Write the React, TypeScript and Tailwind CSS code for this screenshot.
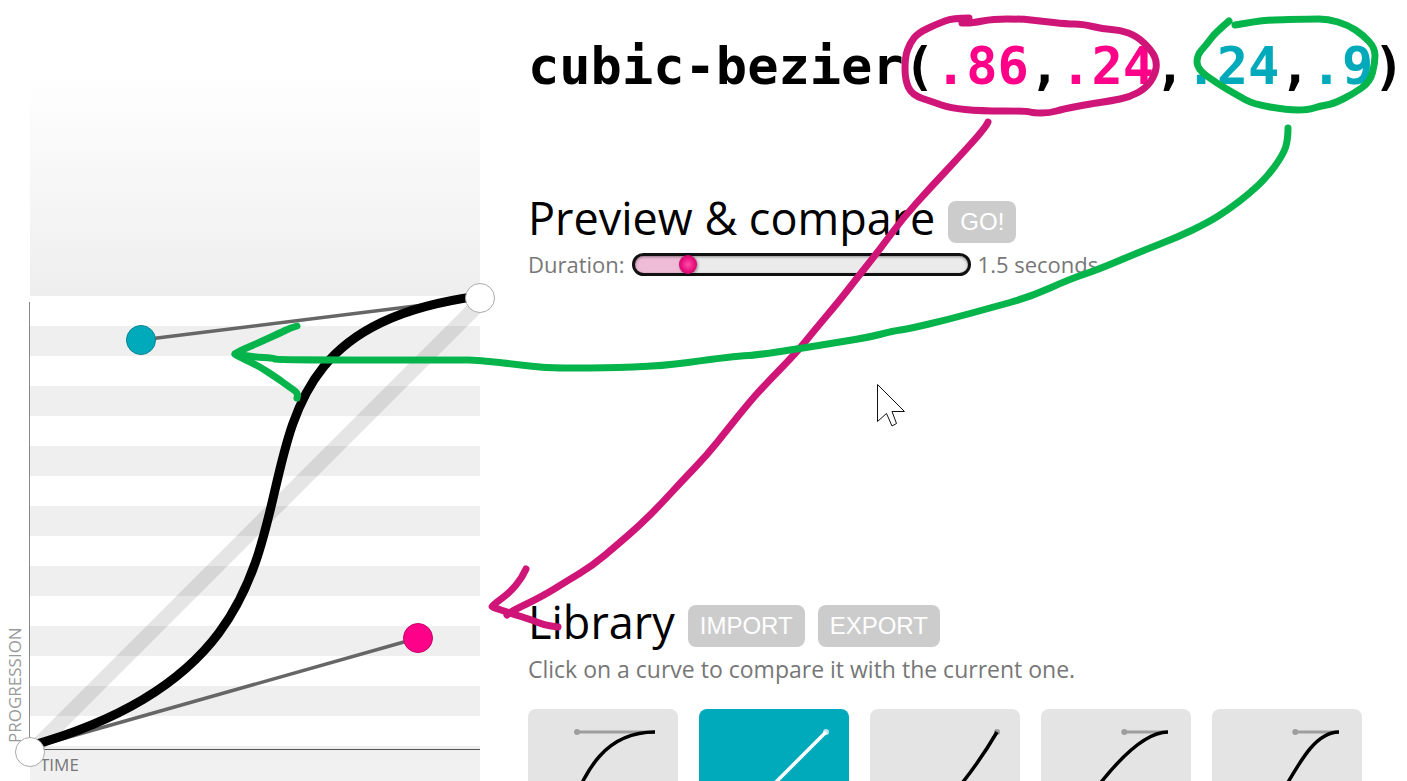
import { useState } from "react";

type Bezier = [number, number, number, number];
type Point = [number, number];

const LIBRARY: { name: string; curve: Bezier }[] = [
  { name: "ease", curve: [0.25, 0.1, 0.25, 1] },
  { name: "linear", curve: [0, 0, 1, 1] },
  { name: "ease-in", curve: [0.42, 0, 1, 1] },
  { name: "ease-out", curve: [0, 0, 0.58, 1] },
  { name: "ease-in-out", curve: [0.42, 0, 0.58, 1] },
];

const STRIPES = [326, 386, 446, 506, 566, 626, 686];

const PINK_LOOP: Point[] = [
  [969, 18], [953, 18], [937, 24], [918, 33], [910, 43], [905, 57], [905, 80], [912, 95], [933, 102], [950, 108],
  [980, 111], [1027, 111], [1033, 113], [1050, 113], [1063, 109], [1090, 104], [1110, 101], [1130, 97], [1146, 88],
  [1155, 75], [1157, 62], [1152, 51], [1137, 36], [1120, 30], [1103, 29], [1082, 24], [1067, 24], [1040, 21],
  [1022, 19], [993, 19], [972, 23], [962, 23],
];
const PINK_LINE: Point[] = [
  [988, 122], [986, 127], [960, 156], [930, 188], [903, 218], [877, 253], [857, 278], [840, 300], [813, 332],
  [797, 352], [760, 390], [743, 410], [727, 430], [707, 455], [683, 480], [660, 505], [640, 525], [617, 545],
  [592, 566], [567, 581], [543, 596], [510, 612], [507, 615],
];
const PINK_TIP: Point[] = [[526, 569], [522, 578], [510, 592], [501, 599], [492, 606], [492, 607], [510, 613], [532, 620], [544, 625], [558, 627]];

const GREEN_LOOP: Point[] = [
  [1229, 21], [1215, 33], [1207, 44], [1197, 55], [1197, 69], [1218, 84], [1237, 95], [1253, 104], [1287, 110],
  [1308, 110], [1320, 106], [1333, 104], [1353, 94], [1370, 82], [1375, 63], [1375, 48], [1363, 35], [1348, 25],
  [1328, 19], [1310, 19], [1267, 20], [1253, 22], [1235, 25],
];
const GREEN_LINE: Point[] = [
  [1288, 128], [1288, 140], [1283, 155], [1267, 177], [1250, 193], [1228, 210], [1207, 223], [1178, 237],
  [1142, 251], [1097, 270], [1070, 279], [1030, 297], [990, 308], [950, 319], [908, 329], [893, 331], [870, 337],
  [840, 342], [797, 349], [757, 355], [740, 356], [713, 359], [663, 366], [603, 368], [550, 368], [530, 366],
  [477, 360], [460, 360], [277, 360], [273, 358], [254, 357], [235, 354],
];
const GREEN_TIP: Point[] = [[297, 326], [290, 328], [280, 333], [258, 343], [235, 353], [235, 355], [257, 365], [277, 378], [288, 386], [298, 393], [297, 398]];

/** Rounds a hand-drawn run of points by curving through the midpoints. */
function smooth(points: Point[]): string {
  let d = `M${points[0][0]} ${points[0][1]}`;
  for (let i = 1; i < points.length - 1; i++) {
    const [x, y] = points[i];
    const [nx, ny] = points[i + 1];
    d += ` Q${x} ${y} ${(x + nx) / 2} ${(y + ny) / 2}`;
  }
  const last = points[points.length - 1];
  return `${d} L${last[0]} ${last[1]}`;
}

function Chart() {
  return (
    <svg className="block" width="510" height="976" viewBox="0 0 510 976" role="img" aria-label="Progression over time">
      <defs>
        <linearGradient id="fadeIn" x1="0" y1="0" x2="0" y2="1">
          <stop offset="0" stopColor="#fff" />
          <stop offset="1" stopColor="#eee" />
        </linearGradient>
        <linearGradient id="fadeOut" x1="0" y1="0" x2="0" y2="1">
          <stop offset="0" stopColor="#efefef" />
          <stop offset="1" stopColor="#fff" />
        </linearGradient>
      </defs>
      <rect x="30" y="71" width="450" height="225" fill="url(#fadeIn)" />
      {STRIPES.map((y) => (
        <rect key={y} x="30" y={y} width="450" height="30" fill="#efefef" />
      ))}
      <rect x="30" y="746" width="450" height="226" fill="url(#fadeOut)" />
      <path d="M30 753L480 303" stroke="#000" strokeOpacity=".1" strokeWidth="15" />
      <path d="M29.5 302V750" stroke="#888" />
      <path d="M30 749.5H480" stroke="#555" />
      <g className="uppercase" fontFamily="'Open Sans', 'Noto Sans', sans-serif" fontSize="17">
        <text x="40" y="771" fill="#777">Time</text>
        <text transform="translate(21 743) rotate(-90)" fill="#999">Progression</text>
      </g>
      <g fill="none">
        <path d="M30 748L418 638M480 298L141 340" stroke="#666" strokeWidth="3.5" />
        <path d="M30 746C418 638 141 340 480 296" stroke="#000" strokeWidth="9" />
      </g>
      <circle cx="30" cy="752" r="14.5" fill="#fff" stroke="#aaa" />
      <circle cx="480" cy="298" r="14.5" fill="#fff" stroke="#aaa" />
      <circle cx="141" cy="340" r="14.5" fill="#0ab" stroke="#078391" />
      <circle cx="418" cy="638" r="14.5" fill="#f08" stroke="#c0066a" />
    </svg>
  );
}

function Thumbnail({ curve, active }: { curve: Bezier; active: boolean }) {
  const at = (x: number, y: number) => `${23 + x * 104} ${127 - y * 104}`;
  const [x1, y1, x2, y2] = curve;
  const ink = active ? "#fff" : "#000";
  return (
    <svg className="block" width="150" height="150" viewBox="0 0 150 150" aria-hidden="true">
      <g opacity={active ? 0.7 : 0.3}>
        <path d={`M${at(0, 0)}L${at(x1, y1)}M${at(1, 1)}L${at(x2, y2)}`} stroke={ink} strokeWidth="3" />
        <circle cx={23 + x1 * 104} cy={127 - y1 * 104} r="3" fill={ink} />
        <circle cx={23 + x2 * 104} cy={127 - y2 * 104} r="3" fill={ink} />
      </g>
      <path d={`M${at(0, 0)}C${at(x1, y1)} ${at(x2, y2)} ${at(1, 1)}`} fill="none" stroke={ink} strokeWidth="3.5" />
    </svg>
  );
}

function PillButton({ children }: { children: string }) {
  return (
    <button
      type="button"
      className="h-[42px] rounded-lg bg-[#ccc] px-3 font-['Liberation_Sans',Arial,sans-serif] text-2xl text-white uppercase hover:bg-[#0ab]"
    >
      {children}
    </button>
  );
}

function Annotations() {
  return (
    <svg className="pointer-events-none absolute top-0 left-0" width="1407" height="781" viewBox="0 0 1407 781" aria-hidden="true">
      <g fill="none" strokeWidth="7" strokeLinecap="round" strokeLinejoin="round">
        <g stroke="#cf1578">
          <path d={smooth(PINK_LOOP)} />
          <path d={smooth(PINK_LINE)} />
          <path d={smooth(PINK_TIP)} />
        </g>
        <g stroke="#05b44b">
          <path d={smooth(GREEN_LOOP)} />
          <path d={smooth(GREEN_LINE)} />
          <path d={smooth(GREEN_TIP)} />
        </g>
      </g>
      <path d="M877.5 384.5L904.5 411.5H892L896.5 423.5L892 426L886.5 413.5L877.5 421.5Z" fill="#fff" stroke="#111" />
    </svg>
  );
}

export default function App() {
  const [duration, setDuration] = useState(1.5);
  const [selected, setSelected] = useState("linear");
  const fill = `${((duration - 0.1) / 9.9) * 95 + 3}%`;

  return (
    <div className="relative flex h-screen overflow-hidden bg-white font-['Open_Sans','Noto_Sans',sans-serif] text-black">
      <aside className="w-[528px] shrink-0">
        <Chart />
      </aside>

      <main className="flex min-w-0 flex-1 flex-col">
        <h1 className="mt-[26px] font-['DejaVu_Sans_Mono',monospace] text-[52px] leading-[80px] font-bold whitespace-nowrap">
          cubic-bezier(<span className="text-[#f08]">.86</span>,<span className="text-[#f08]">.24</span>,
          <span className="text-[#0ab]">.24</span>,<span className="text-[#0ab]">.9</span>)
        </h1>

        <section className="mt-[88px] min-h-[404px]">
          <div className="flex h-14 items-center gap-[13px]">
            <h2 className="pb-2 text-[45px] leading-[48px]">Preview &amp; compare</h2>
            <PillButton>Go!</PillButton>
          </div>
          <div className="flex items-center gap-[7px] text-[22px] leading-7 text-[#777]">
            <label htmlFor="duration">Duration:</label>
            <input
              id="duration"
              type="range"
              min={0.1}
              max={10}
              step={0.1}
              value={duration}
              onChange={(event) => setDuration(Number(event.target.value))}
              className="h-[23px] w-[339px] appearance-none rounded-full border-[3px] border-[#111] bg-[#ebebeb] shadow-[inset_0_1px_3px_rgba(0,0,0,0.4)] [&::-webkit-slider-thumb]:h-[19px] [&::-webkit-slider-thumb]:w-[18px] [&::-webkit-slider-thumb]:appearance-none [&::-webkit-slider-thumb]:rounded-full [&::-webkit-slider-thumb]:bg-[radial-gradient(circle,#ff4fa8_0%,#e9127f_50%,#a8004f_100%)] [&::-webkit-slider-thumb]:shadow-[1px_1px_3px_rgba(0,0,0,0.4)]"
              style={{ backgroundImage: `linear-gradient(to right, #efbcd8 ${fill}, transparent ${fill})` }}
            />
            <output htmlFor="duration">{duration} seconds</output>
          </div>
        </section>

        <section>
          <div className="flex h-14 items-center gap-[13px]">
            <h2 className="pb-2 text-[45px] leading-[48px]">Library</h2>
            <PillButton>Import</PillButton>
            <PillButton>Export</PillButton>
          </div>
          <p className="text-[23px] leading-[30px] text-[#777]">Click on a curve to compare it with the current one.</p>
          <div className="mt-[25px] grid grid-cols-[repeat(auto-fill,150px)] gap-[21px]">
            {LIBRARY.map(({ name, curve }) => (
              <button
                key={name}
                type="button"
                aria-label={name}
                aria-pressed={selected === name}
                onClick={() => setSelected(name)}
                className={selected === name ? "rounded-lg bg-[#0ab]" : "rounded-lg bg-[#e4e4e4]"}
              >
                <Thumbnail curve={curve} active={selected === name} />
              </button>
            ))}
          </div>
        </section>
      </main>

      <Annotations />
    </div>
  );
}
